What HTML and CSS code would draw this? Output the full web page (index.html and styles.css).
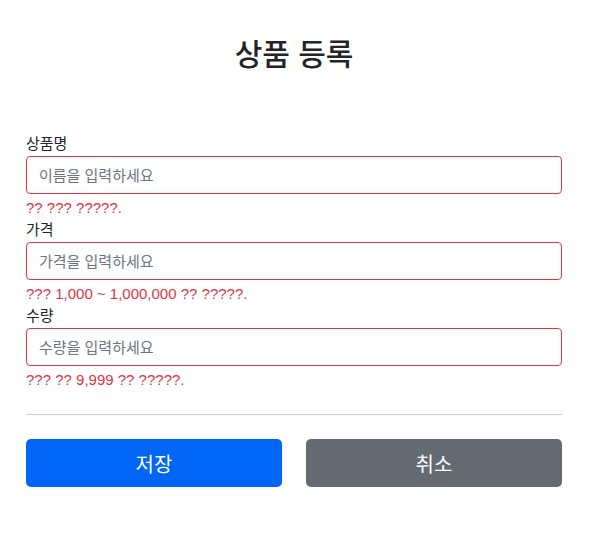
FILE: index.html
```html
<!DOCTYPE html>
<html lang="ko">
<head>
<meta charset="utf-8">
<title>상품 등록</title>
<link rel="stylesheet" href="styles.css">
</head>
<body>
<div class="container">
  <div class="header">
    <h2 class="title">상품 등록</h2>
  </div>
  <form class="form">
    <div class="field">
      <label class="label" for="itemName">상품명</label>
      <input id="itemName" class="control" type="text" placeholder="이름을 입력하세요">
      <div class="feedback">?? ??? ?????.</div>
    </div>
    <div class="field">
      <label class="label" for="price">가격</label>
      <input id="price" class="control" type="text" placeholder="가격을 입력하세요">
      <div class="feedback">??? 1,000 ~ 1,000,000 ?? ?????.</div>
    </div>
    <div class="field">
      <label class="label" for="quantity">수량</label>
      <input id="quantity" class="control" type="text" placeholder="수량을 입력하세요">
      <div class="feedback">??? ?? 9,999 ?? ?????.</div>
    </div>
    <hr class="divider">
    <div class="actions">
      <button class="btn btn-primary" type="submit">저장</button>
      <button class="btn btn-secondary" type="button">취소</button>
    </div>
  </form>
</div>
</body>
</html>
```

FILE: styles.css
```css
* { box-sizing: border-box; }
html, body {
  margin: 0;
  padding: 0;
  background: #fff;
}
body {
  font-family: "Liberation Sans", "Noto Sans CJK KR", "Noto Sans", sans-serif;
  color: #212529;
  font-size: 16px;
  line-height: 1.5;
}
.container {
  width: 536px;
  margin-left: 26px;
}
.header {
  padding: 37px 0 60px;
  text-align: center;
}
.title {
  margin: 0;
  font-size: 30px;
  line-height: 35px;
  font-weight: 500;
}
.form {
  display: flex;
  flex-direction: column;
}
.field {
  display: flex;
  flex-direction: column;
}
.label {
  display: block;
  font-size: 15px;
  line-height: 24px;
}
.control {
  display: block;
  width: 100%;
  height: 38px;
  padding: 0 12px;
  font-family: inherit;
  font-size: 15px;
  color: #212529;
  background: #fff;
  border: 1px solid #dc3545;
  border-radius: 4px;
  outline: none;
}
.control::placeholder {
  color: #6c757d;
  opacity: 1;
}
.feedback {
  margin-top: 4px;
  font-size: 15px;
  line-height: 20px;
  color: #dc3545;
}
.divider {
  margin: 24px 0;
  border: 0;
  border-top: 1px solid #cccccc;
  height: 0;
}
.actions {
  display: grid;
  grid-template-columns: 1fr 1fr;
  column-gap: 24px;
}
.btn {
  height: 48px;
  font-family: inherit;
  font-size: 20px;
  color: #fff;
  border: 0;
  border-radius: 5px;
  cursor: pointer;
}
.btn-primary { background: #0066f5; }
.btn-secondary { background: #636a72; }
```
